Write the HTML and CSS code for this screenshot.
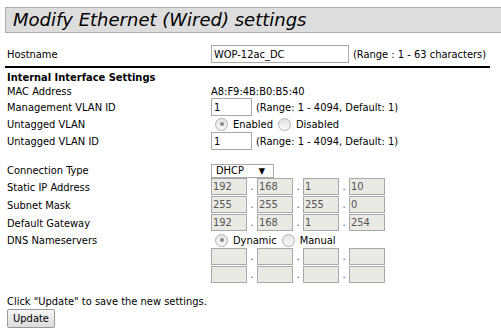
FILE: index.html
```html
<!DOCTYPE html>
<html>
<head>
<meta charset="utf-8">
<link rel="stylesheet" href="styles.css">
</head>
<body>
<div class="title">Modify Ethernet (Wired) settings</div>
<div class="form">
  <div class="row r-host">
    <div class="label">Hostname</div>
    <div class="field"><input class="txt host" type="text" value="WOP-12ac_DC"><span class="hint">(Range : 1 - 63 characters)</span></div>
  </div>
  <div class="rule"></div>
  <div class="row r-head"><div class="heading">Internal Interface Settings</div></div>
  <div class="row r-mac"><div class="label">MAC Address</div><div class="field">A8:F9:4B:B0:B5:40</div></div>
  <div class="row r-in"><div class="label">Management VLAN ID</div><div class="field"><input class="txt vlan" type="text" value="1"><span class="hint">(Range: 1 - 4094, Default: 1)</span></div></div>
  <div class="row r-radio"><div class="label">Untagged VLAN</div><div class="field"><span class="radio on"></span><span class="rlabel">Enabled</span><span class="radio"></span><span class="rlabel">Disabled</span></div></div>
  <div class="row r-in"><div class="label">Untagged VLAN ID</div><div class="field"><input class="txt vlan" type="text" value="1"><span class="hint">(Range: 1 - 4094, Default: 1)</span></div></div>
  <div class="row r-sel"><div class="label">Connection Type</div><div class="field"><div class="select"><span>DHCP</span><span class="arrow">▼</span></div></div></div>
  <div class="row r-ip"><div class="label">Static IP Address</div><div class="field ip"><span class="oct">192</span><span class="dot">.</span><span class="oct">168</span><span class="dot">.</span><span class="oct">1</span><span class="dot">.</span><span class="oct">10</span></div></div>
  <div class="row r-ip"><div class="label">Subnet Mask</div><div class="field ip"><span class="oct">255</span><span class="dot">.</span><span class="oct">255</span><span class="dot">.</span><span class="oct">255</span><span class="dot">.</span><span class="oct">0</span></div></div>
  <div class="row r-ip"><div class="label">Default Gateway</div><div class="field ip"><span class="oct">192</span><span class="dot">.</span><span class="oct">168</span><span class="dot">.</span><span class="oct">1</span><span class="dot">.</span><span class="oct">254</span></div></div>
  <div class="row r-radio r-dns"><div class="label">DNS Nameservers</div><div class="field"><span class="radio on"></span><span class="rlabel">Dynamic</span><span class="radio"></span><span class="rlabel">Manual</span></div></div>
  <div class="row r-ip"><div class="label"></div><div class="field ip"><span class="oct"></span><span class="dot">.</span><span class="oct"></span><span class="dot">.</span><span class="oct"></span><span class="dot">.</span><span class="oct"></span></div></div>
  <div class="row r-ip"><div class="label"></div><div class="field ip"><span class="oct"></span><span class="dot">.</span><span class="oct"></span><span class="dot">.</span><span class="oct"></span><span class="dot">.</span><span class="oct"></span></div></div>
  <div class="note">Click "Update" to save the new settings.</div>
  <button class="btn" type="button">Update</button>
</div>
</body>
</html>
```
FILE: styles.css
```css
html, body {
  margin: 0;
  padding: 0;
  background: #fff;
  overflow: hidden;
}
body {
  font-family: "DejaVu Sans Condensed", "DejaVu Sans", sans-serif;
  font-stretch: condensed;
  font-size: 11px;
  color: #000;
  width: 501px;
}
.title {
  margin: 7px 0 0 5px;
  height: 24px;
  line-height: 24px;
  background: #dddddd;
  border: 1px solid #a9abb8;
  border-right: none;
  padding-left: 7px;
  font-family: "DejaVu Sans", sans-serif;
  font-stretch: normal;
  font-style: italic;
  font-size: 18px;
  color: #000;
  white-space: nowrap;
}
.form {
  padding-left: 7px;
}
.row {
  display: flex;
  align-items: center;
}
.label {
  width: 204px;
  flex: none;
}
.field {
  display: flex;
  align-items: center;
}
.r-host { margin-top: 12px; height: 18px; }
.rule {
  height: 2px;
  background: #000;
  margin: 3px 11px 0 -2px;
}
.r-head { height: 14px; margin-top: 2px; }
.heading { font-weight: bold; }
.r-mac { height: 14px; }
.r-in { height: 18px; }
.r-radio { height: 16px; }
.txt {
  box-sizing: border-box;
  height: 18px;
  border: 1px solid #a9a9a9;
  padding: 0 2px;
  font: inherit;
  color: #000;
  margin: 0;
  outline: none;
}
.host { width: 138px; }
.vlan { width: 41px; }
.hint { margin-left: 4px; }
.radio {
  box-sizing: border-box;
  width: 13px;
  height: 13px;
  border-radius: 50%;
  border: 1px solid #b0b0b0;
  background: linear-gradient(#e4e4e4, #f8f8f8);
  margin-left: 4px;
  position: relative;
}
.radio.on::after {
  content: "";
  position: absolute;
  left: 3.5px;
  top: 3.5px;
  width: 4px;
  height: 4px;
  border-radius: 50%;
  background: #8a8a8a;
}
.rlabel { margin-left: 5px; margin-right: 1px; }
.r-sel { height: 15px; margin-top: 13px; }
.select {
  box-sizing: border-box;
  width: 63px;
  height: 14px;
  border: 1px solid #a9a9a9;
  display: flex;
  align-items: center;
  justify-content: space-between;
  padding: 0 8px 0 4px;
  font-size: 11px;
}
.arrow { font-size: 9px; }
.r-ip { height: 18px; }
.ip { align-items: flex-start; height: 18px; }
.oct {
  box-sizing: border-box;
  width: 36px;
  height: 17px;
  border: 1px solid #a8a8a8;
  background: #ebe9e3;
  color: #555;
  padding-left: 1px;
  line-height: 15px;
}
.dot {
  width: 10px;
  text-align: center;
  color: #2a4f7a;
  line-height: 17px;
}
.note { margin-top: 11px; height: 14px; line-height: 14px; }
.btn {
  margin-top: 0;
  width: 48px;
  height: 19px;
  box-sizing: border-box;
  border: 1px solid #9a9a9a;
  border-radius: 2px;
  background: linear-gradient(#f6f6f6, #dcdcdc);
  font: inherit;
  padding: 0;
  color: #000;
}
```
